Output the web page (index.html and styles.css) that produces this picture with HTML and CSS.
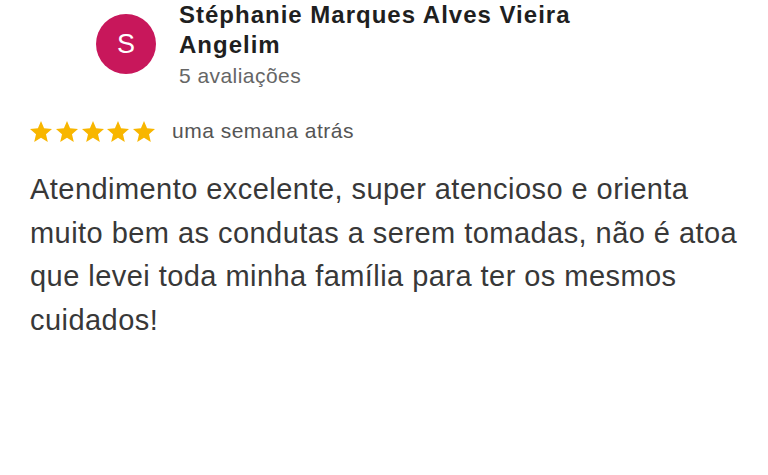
FILE: index.html
```html
<!DOCTYPE html>
<html lang="pt">
<head>
<meta charset="utf-8">
<link rel="stylesheet" href="styles.css">
</head>
<body>
<div class="review">
  <div class="header">
    <div class="avatar">S</div>
    <div class="who">
      <div class="name">Stéphanie Marques Alves Vieira Angelim</div>
      <div class="count">5 avaliações</div>
    </div>
  </div>
  <div class="meta">
    <div class="stars">
      <svg viewBox="2 2 20 19"><path d="M12 17.27L18.18 21l-1.64-7.03L22 9.24l-7.19-.61L12 2 9.19 8.63 2 9.24l5.46 4.73L5.82 21z"/></svg>
      <svg viewBox="2 2 20 19"><path d="M12 17.27L18.18 21l-1.64-7.03L22 9.24l-7.19-.61L12 2 9.19 8.63 2 9.24l5.46 4.73L5.82 21z"/></svg>
      <svg viewBox="2 2 20 19"><path d="M12 17.27L18.18 21l-1.64-7.03L22 9.24l-7.19-.61L12 2 9.19 8.63 2 9.24l5.46 4.73L5.82 21z"/></svg>
      <svg viewBox="2 2 20 19"><path d="M12 17.27L18.18 21l-1.64-7.03L22 9.24l-7.19-.61L12 2 9.19 8.63 2 9.24l5.46 4.73L5.82 21z"/></svg>
      <svg viewBox="2 2 20 19"><path d="M12 17.27L18.18 21l-1.64-7.03L22 9.24l-7.19-.61L12 2 9.19 8.63 2 9.24l5.46 4.73L5.82 21z"/></svg>
    </div>
    <span class="when">uma semana atrás</span>
  </div>
  <p class="text">Atendimento excelente, super atencioso e orienta muito bem as condutas a serem tomadas, não é atoa que levei toda minha família para ter os mesmos cuidados!</p>
</div>
</body>
</html>
```
FILE: styles.css
```css
html, body { margin: 0; padding: 0; background: #fff; }
body { font-family: "Liberation Sans", Arial, sans-serif; }
.review { padding: 0 26px 0 30px; width: 712px; }
.header { display: flex; align-items: flex-start; gap: 23px; padding-left: 66px; }
.avatar {
  width: 60px; height: 60px; border-radius: 50%; background: #c8175b; color: #fff;
  display: flex; align-items: center; justify-content: center; font-size: 27px; margin-top: 14px; flex: none;
}
.who { width: 420px; }
.name { font-size: 24px; font-weight: bold; color: #1f1f1f; line-height: 30px; letter-spacing: 1px; }
.count { font-size: 21px; color: #666; line-height: 30px; margin-top: 1px; letter-spacing: 0.45px; }
.meta { display: flex; align-items: center; gap: 17px; margin-top: 28px; height: 24px; }
.stars { display: flex; gap: 3.75px; }
.stars svg { width: 22px; height: 21px; fill: #f8b600; display: block; }
.when { font-size: 21px; line-height: 24px; color: #555; letter-spacing: 0.5px; }
.text { margin: 25px 0 0; font-size: 29px; line-height: 43.5px; color: #383838; letter-spacing: 0.45px; }
```
